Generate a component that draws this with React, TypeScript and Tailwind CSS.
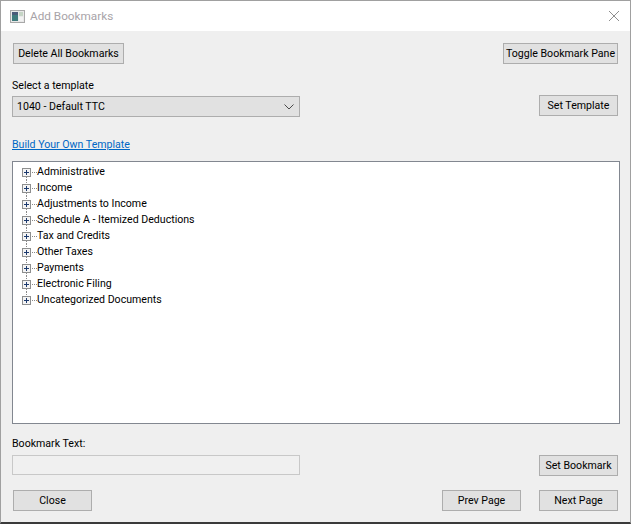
const font = "font-['Roboto','Open_Sans',sans-serif]";
const btn =
  "flex h-[21px] shrink-0 items-center justify-center whitespace-nowrap border border-[#adadad] bg-[#e1e1e1] pt-[2px] text-[10.6px] leading-none text-black";

const items = [
  "Administrative",
  "Income",
  "Adjustments to Income",
  "Schedule A - Itemized Deductions",
  "Tax and Credits",
  "Other Taxes",
  "Payments",
  "Electronic Filing",
  "Uncategorized Documents",
];

function Expander({ first, last }: { first: boolean; last: boolean }) {
  return (
    <svg width="22" height="16" viewBox="0 0 22 16" className="shrink-0" shapeRendering="crispEdges">
      {!first && <line x1="4.5" y1="0" x2="4.5" y2="4" stroke="#8a8a8a" strokeDasharray="1 1" />}
      {!last && <line x1="4.5" y1="13" x2="4.5" y2="16" stroke="#8a8a8a" strokeDasharray="1 1" />}
      <line x1="10" y1="8.5" x2="15" y2="8.5" stroke="#8a8a8a" strokeDasharray="1 1" />
      <rect x="0.5" y="4.5" width="8" height="8" fill="#f4f4f4" stroke="#8e8f8f" />
      <line x1="2" y1="8.5" x2="7" y2="8.5" stroke="#1c3a6e" />
      <line x1="4.5" y1="6" x2="4.5" y2="11" stroke="#1c3a6e" />
    </svg>
  );
}

export default function App() {
  return (
    <div className={`${font} flex h-[524px] w-[631px] flex-col border border-b-2 border-[#a0a0a0] border-b-[#3a3a3a] bg-[#efefef] text-[10.6px] text-black`}>
      <div className="flex h-[30px] shrink-0 items-center justify-between bg-white pl-[9px] pr-[9px]">
        <div className="flex items-center gap-[5px]">
          <svg width="15" height="13" viewBox="0 0 15 13" shapeRendering="crispEdges">
            <rect x="0.5" y="0.5" width="14" height="12" fill="#e8e8e8" stroke="#a8a8a8" />
            <rect x="2" y="2" width="6" height="9" fill="#3f7a7c" />
            <rect x="2" y="2" width="6" height="3" fill="#4a5a78" />
            <rect x="9" y="2" width="4" height="4" fill="#c5d5c5" />
            <rect x="9" y="7" width="4" height="4" fill="#f2f2f2" />
          </svg>
          <span className="pt-[1px] text-[11.75px] text-[#a8a3a8]">Add Bookmarks</span>
        </div>
        <svg width="12" height="12" viewBox="0 0 12 12" className="mr-[1px]">
          <path d="M1 1 L11 11 M11 1 L1 11" stroke="#8f8f8f" strokeWidth="1" fill="none" />
        </svg>
      </div>

      <div className="flex flex-1 flex-col pl-[11px] pr-[12px]">
        <div className="mt-[12px] flex items-center justify-between pl-[1px]">
          <button className={`${btn} w-[111px]`}>Delete All Bookmarks</button>
          <button className={`${btn} w-[115px]`}>Toggle Bookmark Pane</button>
        </div>

        <div className="mt-[12px] flex items-end justify-between">
          <div className="flex flex-col">
            <span className="h-[20px] leading-[20px]">Select a template</span>
            <div className="flex h-[21px] w-[288px] items-center justify-between border border-[#adadad] bg-[#e1e1e1] pl-[4px] pr-[3px] pt-[1px]">
              <span>1040 - Default TTC</span>
              <svg width="12" height="8" viewBox="0 0 12 8" className="mr-[1px]">
                <path d="M1.5 1.5 L6 6 L10.5 1.5" stroke="#4a4a4a" fill="none" />
              </svg>
            </div>
          </div>
          <button className={`${btn} mb-[1px] w-[79px]`}>Set Template</button>
        </div>

        <a className="mt-[18px] h-[18px] self-start leading-[20px] text-[#0067c5] underline">Build Your Own Template</a>

        <div className="mt-[8px] flex h-[263px] w-[608px] flex-col border border-[#828790] bg-white pl-[9px] pt-[2px]">
          {items.map((t, i) => (
            <div key={t} className="flex h-[16px] items-center leading-none">
              <Expander first={i === 0} last={i === items.length - 1} />
              <span className="-ml-[7px]">{t}</span>
            </div>
          ))}
        </div>

        <span className="mt-[10px] h-[18px] leading-[20px]">Bookmark Text:</span>
        <div className="mt-[3px] flex items-start justify-between">
          <div className="h-[20px] w-[288px] border border-[#c8c8c8] bg-[#f0f0f0]" />
          <button className={`${btn} w-[79px]`}>Set Bookmark</button>
        </div>

        <div className="mt-[14px] flex items-center justify-between pl-[1px]">
          <button className={`${btn} w-[79px]`}>Close</button>
          <div className="flex gap-[18px]">
            <button className={`${btn} w-[79px]`}>Prev Page</button>
            <button className={`${btn} w-[79px]`}>Next Page</button>
          </div>
        </div>
      </div>
    </div>
  );
}
